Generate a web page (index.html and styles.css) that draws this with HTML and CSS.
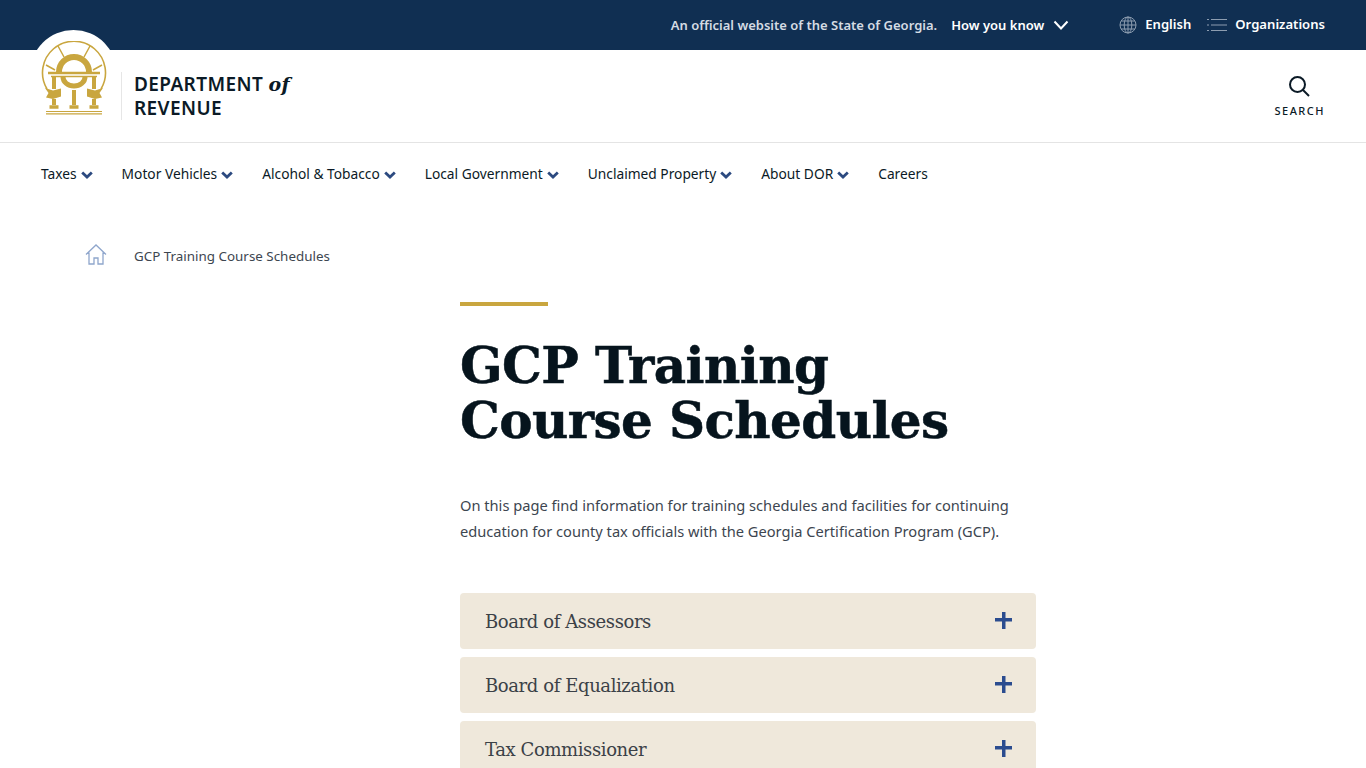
FILE: index.html
```html
<!DOCTYPE html>
<html lang="en">
<head>
    <meta charset="UTF-8">
    <title>GCP Training Course Schedules | Department of Revenue</title>
    <link rel="stylesheet" href="styles.css">
</head>
<body>
<div class="topbar">
    <span class="official">An official website of the State of Georgia.</span>
    <span class="know">How you know</span>
    <svg class="know-arrow" width="16" height="10" viewBox="0 0 16 10"><path d="M1.500 1.500 8 8.500l6.500-7" fill="none" stroke="#fff" stroke-width="2"/></svg>
    <svg class="globe" width="18" height="18" viewBox="0 0 18 18" fill="none" stroke="#8d9db0" stroke-width="1"><circle cx="9" cy="9" r="8"/><ellipse cx="9" cy="9" rx="3.800" ry="8"/><path d="M9 1v16M1 9h16M2.200 5h13.600M2.200 13h13.600"/></svg>
    <span class="top-link">English</span>
    <svg class="orgs" width="20" height="14" viewBox="0 0 20 14" fill="none" stroke="#8d9db0" stroke-width="1"><path d="M0 1.500h2M4 1.500h16M0 7h2M4 7h16M0 12.500h2M4 12.500h16"/></svg>
    <span class="top-link">Organizations</span>
</div>
<header class="masthead">
    <div class="seal">
        <svg width="66" height="74" viewBox="0 0 66 74" fill="none" stroke="#c9a63f">
            <path d="M6 48A31.500 31.500 0 1 1 60 48" stroke-width="1.600"/>
            <path d="M5 24 14 29M17 5 23 16M49 5 43 16M61 24 52 29" stroke-width="1.500"/>
            <path d="M18 31a15 15 0 0 1 30 0" stroke-width="6"/>
            <path d="M22 36a11 9 0 0 0 22 0" stroke-width="5"/>
            <path d="M7 32h52" stroke-width="2.500"/>
            <path d="M10 35.500h46" stroke-width="1.500"/>
            <path d="M13 36v12M13 58v6M33 49v15M53 36v12M53 58v6" stroke-width="4"/>
            <path d="M4 47l8 2.500 8-2v8l-8 2.500-7-1.500 2.500-4.500zM62 47l-8 2.500-8-2v8l8 2.500 7-1.500-2.500-4.500z" fill="#c9a63f" stroke="none"/>
            <path d="M8.500 66h9M28.500 66h9M48.500 66h9" stroke-width="3.500"/>
            <path d="M5 70.500h56M5 72.800h56" stroke-width="1.200"/>
        </svg>
    </div>
    <div class="wordmark">DEPARTMENT <em>of</em><br>REVENUE</div>
    <div class="search">
        <svg class="search-icon" width="22" height="22" viewBox="0 0 22 22" fill="none" stroke="#0b1a26" stroke-width="2"><circle cx="9.500" cy="9.500" r="7.500"/><path d="m15 15 6 6"/></svg>
        <span>SEARCH</span>
    </div>
</header>
<nav class="mainnav">
    <a class="navitem">Taxes<svg class="caret" width="12" height="8" viewBox="0 0 12 8"><path d="M1.200 1.500 6 6l4.800-4.500"/></svg></a>
    <a class="navitem">Motor Vehicles<svg class="caret" width="12" height="8" viewBox="0 0 12 8"><path d="M1.200 1.500 6 6l4.800-4.500"/></svg></a>
    <a class="navitem">Alcohol &amp; Tobacco<svg class="caret" width="12" height="8" viewBox="0 0 12 8"><path d="M1.200 1.500 6 6l4.800-4.500"/></svg></a>
    <a class="navitem">Local Government<svg class="caret" width="12" height="8" viewBox="0 0 12 8"><path d="M1.200 1.500 6 6l4.800-4.500"/></svg></a>
    <a class="navitem">Unclaimed Property<svg class="caret" width="12" height="8" viewBox="0 0 12 8"><path d="M1.200 1.500 6 6l4.800-4.500"/></svg></a>
    <a class="navitem">About DOR<svg class="caret" width="12" height="8" viewBox="0 0 12 8"><path d="M1.200 1.500 6 6l4.800-4.500"/></svg></a>
    <a class="navitem">Careers</a>
</nav>
<div class="crumbs">
    <svg class="home" width="22" height="21" viewBox="0 0 22 21" fill="none" stroke="#8fa6cc" stroke-width="1.300"><path d="M1 10.500 11 1l10 9.500M4 8.500V20h5v-6h4v6h5V8.500"/></svg>
    <span>GCP Training Course Schedules</span>
</div>
<main class="content">
    <div class="rule"></div>
    <h1>GCP Training<br>Course Schedules</h1>
    <p class="lead">On this page find information for training schedules and facilities for continuing education for county tax officials with the Georgia Certification Program (GCP).</p>
    <div class="accordion">
        <div class="panel"><span>Board of Assessors</span><b class="plus"></b></div>
        <div class="panel"><span>Board of Equalization</span><b class="plus"></b></div>
        <div class="panel"><span>Tax Commissioner</span><b class="plus"></b></div>
    </div>
</main>
</body>
</html>
```

FILE: styles.css
```css
*{
    margin:0;
    padding:0;
    box-sizing:border-box;
}
html,body{
    height:768px;
    overflow:hidden;
}
body{
    background-color:#fff;
    font-family:"Noto Sans",sans-serif;
    color:#0b1a26;
}
.topbar{
    height:50px;
    background-color:#102f52;
    display:flex;
    align-items:center;
    justify-content:flex-end;
    padding-right:41px;
    font-size:13px;
    font-weight:600;
    color:#fff;
}
.official{
    color:#d5dce4;
    margin-right:14px;
}
.know-arrow{
    margin-left:9px;
    margin-right:50px;
}
.globe{
    margin-right:8px;
    margin-bottom:1px;
}
.top-link{
    margin-bottom:2px;
    font-size:13.100px;
}
.orgs{
    margin-left:16px;
    margin-right:8px;
    margin-bottom:1px;
}
.masthead{
    height:93px;
    border-bottom:1px solid #e4e4e4;
    display:flex;
    align-items:center;
    padding:0 41px 0 30px;
    position:relative;
}
.seal{
    position:absolute;
    left:30px;
    top:-20px;
    width:87px;
    height:87px;
    border-radius:50%;
    background-color:#fff;
    display:flex;
    justify-content:center;
    padding-top:11px;
}
.wordmark{
    margin-left:91px;
    border-left:1px solid #e6e6e6;
    padding-left:12px;
    font-size:19px;
    line-height:24px;
    font-weight:600;
    letter-spacing:.4px;
}
.wordmark em{
    font-family:"DejaVu Serif",serif;
    font-weight:700;
    font-size:19px;
}
.search{
    margin-left:auto;
    display:flex;
    flex-direction:column;
    align-items:center;
    gap:6px;
    font-size:11px;
    font-weight:500;
    letter-spacing:1.500px;
}
.search-icon{
    margin-right:2px;
}
.mainnav{
    display:flex;
    align-items:center;
    gap:29px;
    padding:21px 0 0 41px;
    font-size:13.750px;
    line-height:19px;
}
.navitem{
    display:flex;
    align-items:center;
    gap:4px;
}
.caret{
    fill:none;
    stroke:#2c4a80;
    stroke-width:2.800;
    margin-top:2px;
}
.crumbs{
    display:flex;
    align-items:center;
    gap:27px;
    padding:61px 0 0 85px;
    font-size:13.400px;
    color:#3d4650;
}
.home{
    margin-bottom:2px;
}
.content{
    width:576px;
    margin:35px 0 0 460px;
}
.rule{
    width:88px;
    height:4px;
    background-color:#c9a63f;
}
h1{
    margin-top:32px;
    font-family:"DejaVu Serif",serif;
    font-size:50px;
    line-height:55px;
    font-weight:700;
    color:#06141d;
    letter-spacing:-.6px;
    -webkit-text-stroke:.5px #06141d;
}
.lead{
    margin-top:44px;
    font-size:14.650px;
    line-height:26px;
    color:#3d4650;
}
.accordion{
    margin-top:49px;
    display:flex;
    flex-direction:column;
    gap:8px;
}
.panel{
    height:56px;
    flex:none;
    background-color:#efe8db;
    border-radius:4px;
    display:flex;
    align-items:center;
    justify-content:space-between;
    padding:0 24px 0 25px;
    font-family:"DejaVu Serif",serif;
    font-size:18px;
    letter-spacing:-.4px;
    color:#3b4147;
}
.plus{
    width:17px;
    height:17px;
    margin-bottom:2px;
    background:linear-gradient(#2b4c8f,#2b4c8f) center/17px 3.500px no-repeat,linear-gradient(#2b4c8f,#2b4c8f) center/3.500px 17px no-repeat;
}
```
